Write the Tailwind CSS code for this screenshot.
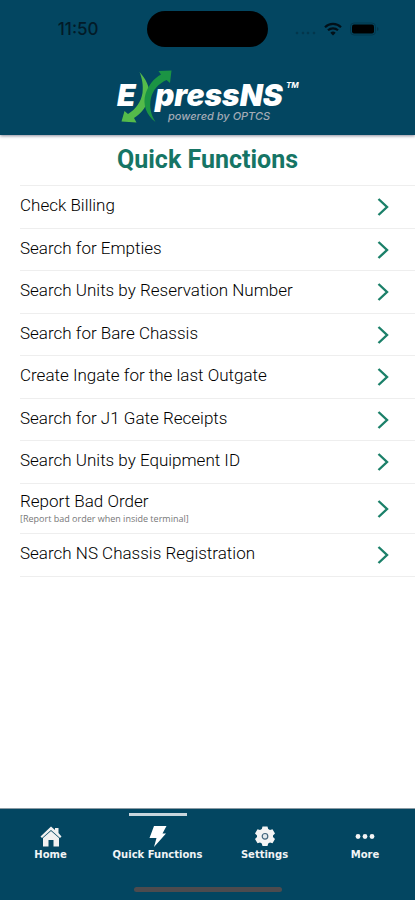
<!DOCTYPE html>
<html lang="en">
<head>
<meta charset="utf-8">
<meta name="viewport" content="width=device-width, initial-scale=1">
<title>ExpressNS - Quick Functions</title>
<script src="https://cdn.jsdelivr.net/npm/@tailwindcss/browser@4"></script>
</head>
<body class="flex min-h-screen flex-col bg-white font-['Roboto',sans-serif] text-black">
<svg class="hidden"><symbol id="chevron" viewBox="0 0 12 20"><path d="M1.500 2 10 10l-8.500 8" fill="none" stroke="#1b8069" stroke-width="2.400"/></symbol></svg>
<header class="bg-[#034661] shadow-[0_1px_3px_#8a8a9a]">
  <div class="grid grid-cols-3 items-center pt-[11px]">
    <span class="pl-[18px] text-center font-['Inter',sans-serif] text-[17px] leading-6 font-medium text-[#021b28]">11:50</span>
    <div class="h-9 w-[121px] justify-self-center rounded-full bg-black"></div>
    <div class="flex items-center gap-2 justify-self-end pr-9">
      <svg class="mt-2 h-1 w-[21px]" viewBox="0 0 21 4" fill="#03364c"><circle cx="2" cy="2" r="1.300"/><circle cx="8" cy="2" r="1.300"/><circle cx="13" cy="2" r="1.300"/><circle cx="19" cy="2" r="1.300"/></svg>
      <svg class="h-[14px] w-[18px]" viewBox="0 0 18 14" fill="none" stroke="#021018" stroke-width="2.200"><path d="M1 5.200a11.500 11.500 0 0 1 16 0M4 8.300a7.200 7.200 0 0 1 10 0"/><path d="M6.300 10.800a4 4 0 0 1 5.400 0L9 13.600z" fill="#021018" stroke="none"/></svg>
      <svg class="h-[14px] w-[29px]" viewBox="0 0 29 14"><rect x=".5" y="1" width="25" height="12" rx="3.500" fill="none" stroke="#03364c"/><rect x="2" y="2.500" width="22" height="9" rx="2" fill="#000"/><path d="M27 5v4q1.500-.7 1.500-2T27 5z" fill="#03364c"/></svg>
    </div>
  </div>
  <div class="flex justify-center pt-5 pb-2">
    <svg class="h-[60px] w-[184px]" viewBox="116 67 184 60" role="img" aria-label="ExpressNS powered by OPTCS">
      <path d="M139.500 72C146 79 150 87 149 95C148 105 142 113 134 118L136.500 122.500L121.500 121.500L124.500 111L128 114C136 109 141 102 142.500 93C143.500 85 142 78 139.500 72Z" fill="#55bb4a"/>
      <path d="M155.500 122C146 115 142.500 104 145.500 94C148 86 154 78 161 74.500L158.500 71L171.500 70.500L170 83L166.500 80C158 84 153 90 151 98C149 107 151 115 155.500 122Z" fill="#1b9444"/>
      <g font-family="Inter, sans-serif" font-style="italic" fill="#fff">
        <text x="117" y="106" font-size="30" font-weight="900">E</text>
        <text x="155" y="106" font-size="30" font-weight="900">pressNS</text>
        <text x="286" y="88" font-size="8" font-weight="700">TM</text>
        <text x="168" y="120" font-size="11" font-weight="500" fill="#a3abb6">powered by OPTCS</text>
      </g>
    </svg>
  </div>
</header>
<main class="flex-1">
  <h1 class="pt-[9px] pb-[9px] text-center text-[25px] leading-8 font-bold text-[#167565]">Quick Functions</h1>
  <ul class="ml-5 border-t border-[#eee] text-[17px] leading-5 font-light *:border-b *:border-[#eee]">
    <li><button class="flex h-[42px] w-full items-center justify-between pr-[26px] text-left"><span class="pb-1">Check Billing</span><svg class="h-5 w-3"><use href="#chevron"/></svg></button></li>
    <li><button class="flex h-[41px] w-full items-center justify-between pr-[26px] text-left"><span class="pb-1">Search for Empties</span><svg class="h-5 w-3"><use href="#chevron"/></svg></button></li>
    <li><button class="flex h-[42px] w-full items-center justify-between pr-[26px] text-left"><span class="pb-1">Search Units by Reservation Number</span><svg class="h-5 w-3"><use href="#chevron"/></svg></button></li>
    <li><button class="flex h-[41px] w-full items-center justify-between pr-[26px] text-left"><span class="pb-1">Search for Bare Chassis</span><svg class="h-5 w-3"><use href="#chevron"/></svg></button></li>
    <li><button class="flex h-[42px] w-full items-center justify-between pr-[26px] text-left"><span class="pb-1">Create Ingate for the last Outgate</span><svg class="h-5 w-3"><use href="#chevron"/></svg></button></li>
    <li><button class="flex h-[41px] w-full items-center justify-between pr-[26px] text-left"><span class="pb-1">Search for J1 Gate Receipts</span><svg class="h-5 w-3"><use href="#chevron"/></svg></button></li>
    <li><button class="flex h-[42px] w-full items-center justify-between pr-[26px] text-left"><span class="pb-1">Search Units by Equipment ID</span><svg class="h-5 w-3"><use href="#chevron"/></svg></button></li>
    <li><button class="flex h-[49px] w-full items-center justify-between pr-[26px] text-left"><span class="flex flex-col">Report Bad Order<small class="font-['Open_Sans',sans-serif] text-[9px] leading-4 font-normal text-[#777]">[Report bad order when inside terminal]</small></span><svg class="h-5 w-3"><use href="#chevron"/></svg></button></li>
    <li><button class="flex h-[42px] w-full items-center justify-between pr-[26px] text-left"><span class="pb-1">Search NS Chassis Registration</span><svg class="h-5 w-3"><use href="#chevron"/></svg></button></li>
  </ul>
</main>
<footer class="border-t border-[#8a9aa3] bg-[#034661] font-['DejaVu_Sans',sans-serif] text-[10px] leading-3 font-bold text-[#f1f4f6]">
  <nav class="grid grid-cols-[101fr_113fr_101fr_100fr]">
    <a href="#" class="flex flex-col items-center gap-0.5 border-t-4 border-transparent pt-3"><svg class="h-[22px] w-[22px]" viewBox="0 0 22 22" fill="#f1f1f1"><path d="M11 1.500 15 5V3h3.500v5L21.500 11.500 20 13 11 5 2 13 .5 11.500z"/><path d="M3 13 11 6l8 7v8.500h-5.500V15h-5v6.500H3z"/></svg>Home</a>
    <a href="#" aria-current="page" class="relative flex flex-col items-center gap-0.5 border-t-4 border-transparent pt-3 whitespace-nowrap"><span class="absolute top-0 h-[3px] w-[58px] bg-[#c9d5dc]"></span><svg class="h-[22px] w-[22px]" viewBox="0 0 22 22" fill="#fff"><path d="M7 1h12.500l-4 7.500H19L7 22l2.500-9H2.500z"/></svg>Quick Functions</a>
    <a href="#" class="flex flex-col items-center gap-0.5 border-t-4 border-transparent pt-3"><svg class="h-[22px] w-[22px]" viewBox="0 0 22 22"><path d="M8.500 1.500h5l.7 2.500 1.800 1 2.500-.7 2.500 4.200-2 1.900v1.700l2 1.900-2.500 4.200-2.500-.7-1.800 1-.7 2.500h-5L7.800 18.500 6 17.500l-2.500.7L1 14l2-1.900v-1.700L1 8.500l2.500-4.200L6 5l1.800-1z" fill="#f4f4f4"/><circle cx="11" cy="11.300" r="2.800" fill="#e5eaed" stroke="#41657c" stroke-width="1.200"/></svg>Settings</a>
    <a href="#" class="flex flex-col items-center gap-0.5 border-t-4 border-transparent pt-3"><svg class="h-[22px] w-[22px]" viewBox="0 0 22 22" fill="#f4f4f4"><circle cx="4" cy="11.500" r="2.400"/><circle cx="11" cy="11.500" r="2.400"/><circle cx="18" cy="11.500" r="2.400"/></svg>More</a>
  </nav>
  <div class="mx-auto mt-[26px] mb-2 h-[5px] w-[148px] rounded-full bg-[#4d4b4e]"></div>
</footer>
</body>
</html>
